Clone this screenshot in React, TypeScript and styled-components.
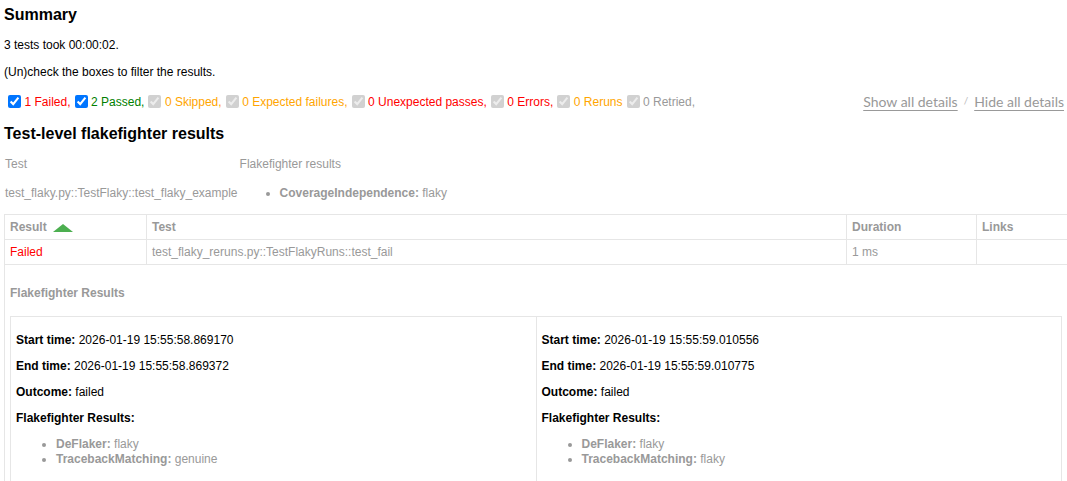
import React from "react";
import styled, { createGlobalStyle } from "styled-components";

const Global = createGlobalStyle`
  html, body { margin: 0; padding: 0; overflow: hidden; background: #fff; }
  body {
    font-family: "Liberation Sans", Arial, Helvetica, sans-serif;
    font-size: 12px;
    color: #999;
  }
  #root { display: block; }
`;

const Page = styled.div`
  padding: 6px 3px 0 4px;
  width: 1060px;
`;

const Heading = styled.h2<{ $after: number }>`
  margin: 0 0 ${(p) => p.$after}px;
  font-size: 16px;
  line-height: 18px;
  font-weight: bold;
  color: #000;
`;

const SummaryText = styled.p`
  margin: 13px 0;
  line-height: 14px;
  color: #000;
`;

const FilterBar = styled.div`
  display: flex;
  justify-content: space-between;
  align-items: center;
  height: 19px;
  margin-bottom: 14px;
`;

const Filters = styled.div`
  display: flex;
  align-items: center;
`;

const Check = styled.input.attrs({ type: "checkbox" })`
  width: 13px;
  height: 13px;
  margin: 3px 3.5px 3px 4px;
`;

const Outcome = styled.span<{ $tone: string }>`
  color: ${(p) => p.$tone};
  line-height: 14px;
`;

const Collapse = styled.div`
  display: flex;
  align-items: center;
  gap: 6px;
`;

const LinkButton = styled.button`
  font-family: "Lato", "Open Sans", sans-serif;
  font-size: 14px;
  color: #999;
  background: none;
  border: none;
  padding: 0;
  text-decoration: underline;
  text-underline-offset: 3px;
  cursor: pointer;
`;

const Slash = styled.span`
  font-family: "Lato", sans-serif;
  font-size: 10px;
  color: #bbb;
  position: relative;
  top: -2px;
`;

const FlakeTable = styled.table`
  border-collapse: collapse;
  border-spacing: 0;
  margin: 0;
`;

const FlakeCell = styled.td<{ $w?: number }>`
  padding: 1px;
  line-height: 14px;
  text-align: left;
  vertical-align: middle;
  width: ${(p) => (p.$w ? `${p.$w}px` : "auto")};
`;

const FlakeList = styled.ul`
  margin: 13px 0;
  padding-left: 40px;
`;

const Item = styled.li`
  line-height: 14px;
`;

const Label = styled.strong`
  font-weight: bold;
`;

const ResultsTable = styled.table`
  border-collapse: collapse;
  table-layout: fixed;
  width: 1064px;
  border: 1px solid #e6e6e6;
`;

const HeadCell = styled.th`
  padding: 5px;
  border: 1px solid #e6e6e6;
  text-align: left;
  font-weight: bold;
  line-height: 14px;
  color: #999;
  white-space: nowrap;
`;

const Cell = styled.td<{ $tone?: string }>`
  padding: 5px;
  border: 1px solid #e6e6e6;
  line-height: 14px;
  vertical-align: top;
  color: ${(p) => p.$tone || "#999"};
`;

const SortArrow = styled.span`
  display: inline-block;
  width: 0;
  height: 0;
  margin-left: 6px;
  border-left: 10px solid transparent;
  border-right: 10px solid transparent;
  border-bottom: 8px solid #4caf50;
  vertical-align: -1px;
`;

const ExtraTitle = styled.div`
  margin: 16px 0;
  font-weight: bold;
  line-height: 14px;
  color: #999;
`;

const RunTable = styled.table`
  border-collapse: collapse;
  table-layout: fixed;
  width: 100%;
  border: 1px solid #e6e6e6;
`;

const RunCell = styled.td`
  padding: 4px 5px 5px;
  border: 1px solid #e6e6e6;
  vertical-align: top;
`;

const RunLine = styled.p`
  margin: 12px 0;
  line-height: 14px;
  color: #000;
`;

const RunList = styled.ul`
  margin: 12px 0;
  padding-left: 40px;
`;

const RunItem = styled.li`
  line-height: 15px;
  color: #999;
`;

type Filter = { label: string; tone: string; on: boolean };

const filters: Filter[] = [
  { label: "1 Failed,", tone: "red", on: true },
  { label: "2 Passed,", tone: "green", on: true },
  { label: "0 Skipped,", tone: "orange", on: false },
  { label: "0 Expected failures,", tone: "orange", on: false },
  { label: "0 Unexpected passes,", tone: "red", on: false },
  { label: "0 Errors,", tone: "red", on: false },
  { label: "0 Reruns", tone: "orange", on: false },
  { label: "0 Retried,", tone: "#999", on: false },
];

type Run = {
  start: string;
  end: string;
  outcome: string;
  results: { name: string; value: string }[];
};

const runs: Run[] = [
  {
    start: "2026-01-19 15:55:58.869170",
    end: "2026-01-19 15:55:58.869372",
    outcome: "failed",
    results: [
      { name: "DeFlaker:", value: "flaky" },
      { name: "TracebackMatching:", value: "genuine" },
    ],
  },
  {
    start: "2026-01-19 15:55:59.010556",
    end: "2026-01-19 15:55:59.010775",
    outcome: "failed",
    results: [
      { name: "DeFlaker:", value: "flaky" },
      { name: "TracebackMatching:", value: "flaky" },
    ],
  },
];

export default function App() {
  return (
    <>
      <Global />
      <Page>
        <Heading $after={14}>Summary</Heading>
        <SummaryText>3 tests took 00:00:02.</SummaryText>
        <SummaryText>(Un)check the boxes to filter the results.</SummaryText>
        <FilterBar>
          <Filters>
            {filters.map((f) => (
              <React.Fragment key={f.label}>
                <Check defaultChecked disabled={!f.on} />
                <Outcome $tone={f.tone}>{f.label}</Outcome>
              </React.Fragment>
            ))}
          </Filters>
          <Collapse>
            <LinkButton>Show all details</LinkButton>
            <Slash>/</Slash>
            <LinkButton>Hide all details</LinkButton>
          </Collapse>
        </FilterBar>

        <Heading $after={13}>Test-level flakefighter results</Heading>
        <FlakeTable>
          <tbody>
            <tr>
              <FlakeCell $w={230}>Test</FlakeCell>
              <FlakeCell>Flakefighter results</FlakeCell>
            </tr>
            <tr>
              <FlakeCell $w={230}>test_flaky.py::TestFlaky::test_flaky_example</FlakeCell>
              <FlakeCell>
                <FlakeList>
                  <Item>
                    <Label>CoverageIndependence:</Label> flaky
                  </Item>
                </FlakeList>
              </FlakeCell>
            </tr>
          </tbody>
        </FlakeTable>

        <ResultsTable>
          <colgroup>
            <col style={{ width: 142 }} />
            <col style={{ width: 700 }} />
            <col style={{ width: 130 }} />
            <col />
          </colgroup>
          <thead>
            <tr>
              <HeadCell>
                Result
                <SortArrow />
              </HeadCell>
              <HeadCell>Test</HeadCell>
              <HeadCell>Duration</HeadCell>
              <HeadCell>Links</HeadCell>
            </tr>
          </thead>
          <tbody>
            <tr>
              <Cell $tone="red">Failed</Cell>
              <Cell>test_flaky_reruns.py::TestFlakyRuns::test_fail</Cell>
              <Cell>1 ms</Cell>
              <Cell />
            </tr>
            <tr>
              <Cell colSpan={4}>
                <ExtraTitle>Flakefighter Results</ExtraTitle>
                <RunTable>
                  <tbody>
                    <tr>
                      {runs.map((r) => (
                        <RunCell key={r.start}>
                          <RunLine>
                            <Label>Start time:</Label> {r.start}
                          </RunLine>
                          <RunLine>
                            <Label>End time:</Label> {r.end}
                          </RunLine>
                          <RunLine>
                            <Label>Outcome:</Label> {r.outcome}
                          </RunLine>
                          <RunLine>
                            <Label>Flakefighter Results:</Label>
                          </RunLine>
                          <RunList>
                            {r.results.map((x) => (
                              <RunItem key={x.name}>
                                <Label>{x.name}</Label> {x.value}
                              </RunItem>
                            ))}
                          </RunList>
                        </RunCell>
                      ))}
                    </tr>
                  </tbody>
                </RunTable>
              </Cell>
            </tr>
          </tbody>
        </ResultsTable>
      </Page>
    </>
  );
}
